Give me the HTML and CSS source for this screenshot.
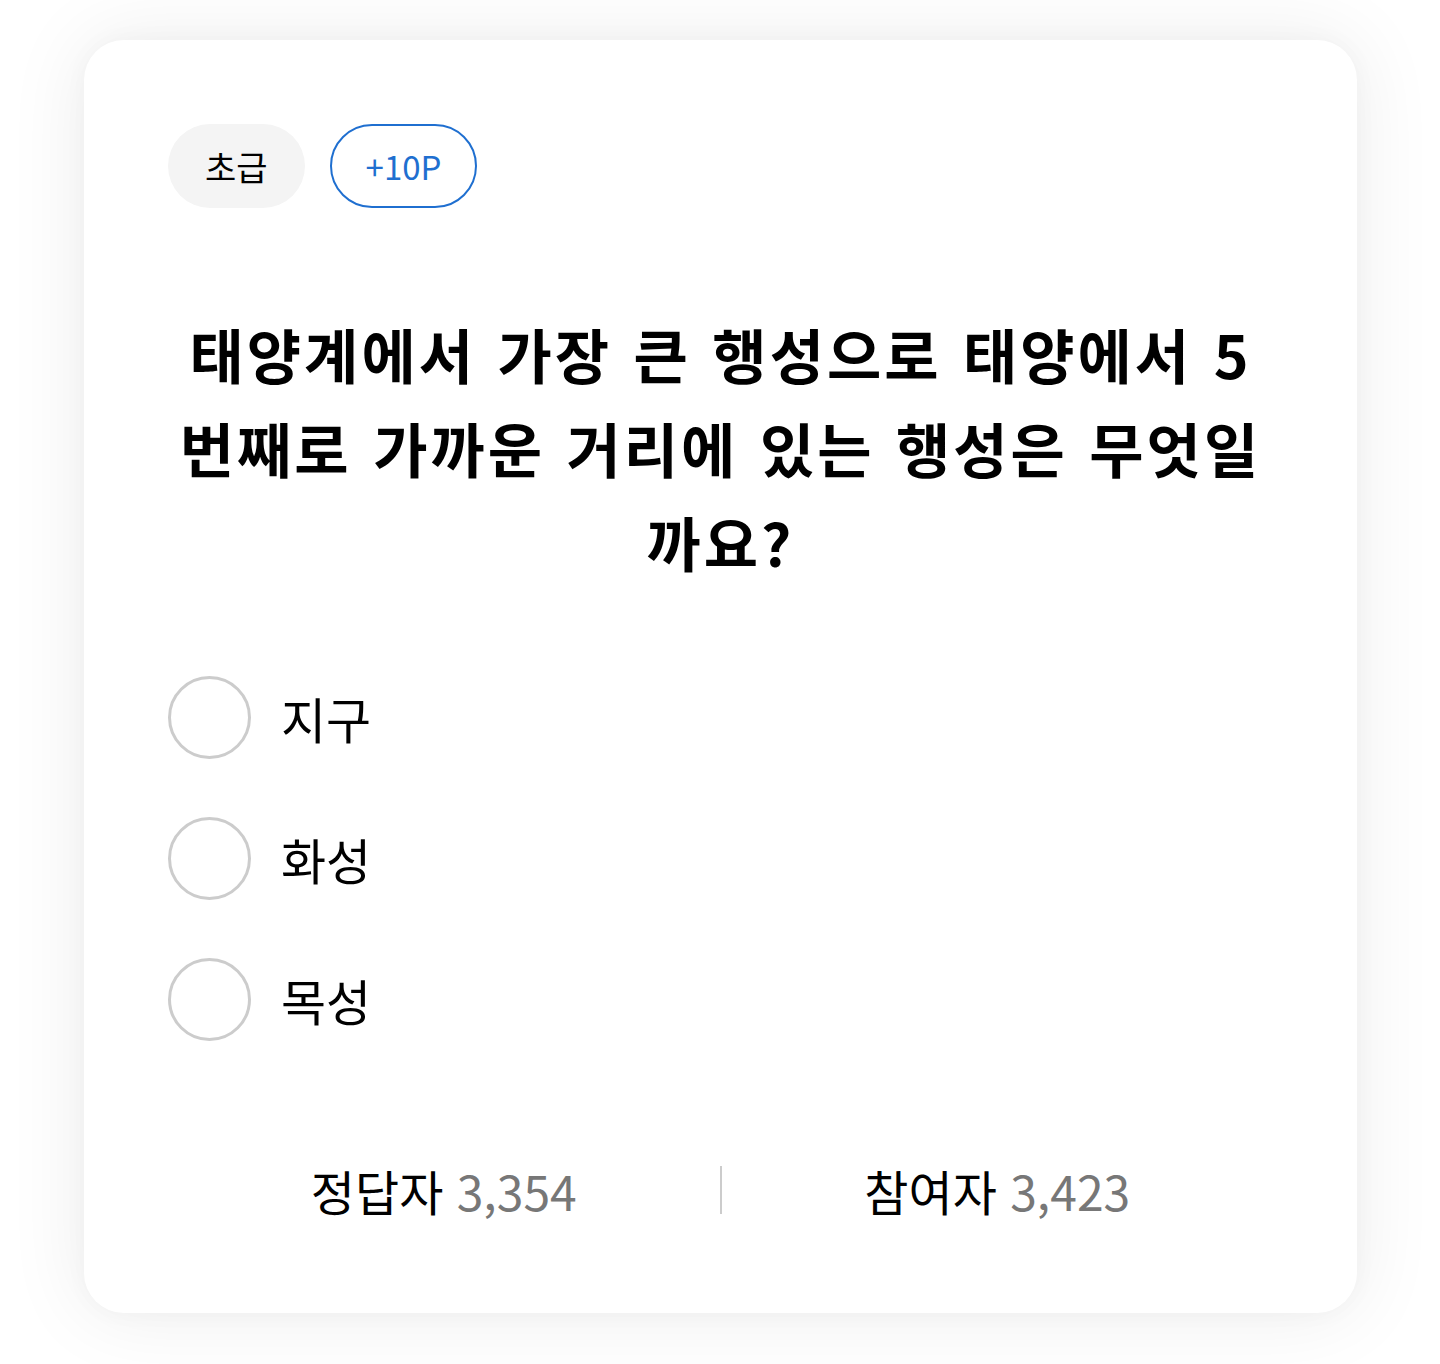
FILE: index.html
```html
<!DOCTYPE html>
<html lang="ko">
<head>
    <meta charset="UTF-8">
    <meta name="viewport" content="width=device-width, initial-scale=1.0">
    <title>퀴즈</title>
    <link rel="stylesheet" href="styles.css">
</head>
<body>
    <div class="quiz-card">
        <div class="tags">
            <span class="tag tag-level">초급</span>
            <span class="tag tag-point">+10P</span>
        </div>
        <h1 class="question">태양계에서 가장 큰 행성으로 태양에서 5번째로 가까운 거리에 있는 행성은 무엇일까요?</h1>
        <ul class="options">
            <li class="option"><span class="radio"></span><span class="option-label">지구</span></li>
            <li class="option"><span class="radio"></span><span class="option-label">화성</span></li>
            <li class="option"><span class="radio"></span><span class="option-label">목성</span></li>
        </ul>
        <div class="stats">
            <div class="stat">정답자 <span class="stat-num">3,354</span></div>
            <div class="stat-divider"></div>
            <div class="stat">참여자 <span class="stat-num">3,423</span></div>
        </div>
    </div>
</body>
</html>
```

FILE: styles.css
```css
body {
    margin: 0;
    padding: 40px 83px 51px 84px;
    background-color: #fff;
    font-family: "Noto Sans CJK KR", "Noto Sans", sans-serif;
    color: #000;
}
.quiz-card {
    background-color: #fff;
    border-radius: 40px;
    padding: 84px 84px 88px 84px;
    box-shadow: 0 0 80px 4px rgba(0, 0, 0, 0.07), 0 0 24px rgba(0, 0, 0, 0.03);
}
.tags {
    display: flex;
    gap: 25px;
}
.tag {
    display: inline-flex;
    align-items: center;
    justify-content: center;
    box-sizing: border-box;
    height: 84px;
    padding: 0 37px;
    border-radius: 42px;
    font-size: 34px;
}
.tag-level {
    background-color: #f4f4f4;
}
.tag-point {
    border: 2.5px solid #1f6fd0;
    color: #1f6fd0;
    padding: 0 34px;
    font-size: 33px;
}
.question {
    margin: 99px 0 0;
    padding: 0 10px;
    font-size: 59px;
    font-weight: bold;
    line-height: 94px;
    letter-spacing: 3px;
    word-spacing: 2px;
    text-align: center;
}
.options {
    list-style: none;
    margin: 87px 0 0;
    padding: 0;
    display: flex;
    flex-direction: column;
    gap: 58px;
}
.option {
    display: flex;
    align-items: center;
    gap: 30px;
}
.radio {
    box-sizing: border-box;
    width: 83px;
    height: 83px;
    border-radius: 50%;
    border: 3px solid #cccccc;
}
.option-label {
    font-size: 49px;
}
.stats {
    margin-top: 114px;
    display: flex;
    align-items: center;
}
.stat {
    flex: 1;
    text-align: center;
    font-size: 48px;
    line-height: 70px;
}
.stat-num {
    color: #777;
}
.stat-divider {
    width: 2px;
    height: 48px;
    background-color: #cccccc;
}
```
